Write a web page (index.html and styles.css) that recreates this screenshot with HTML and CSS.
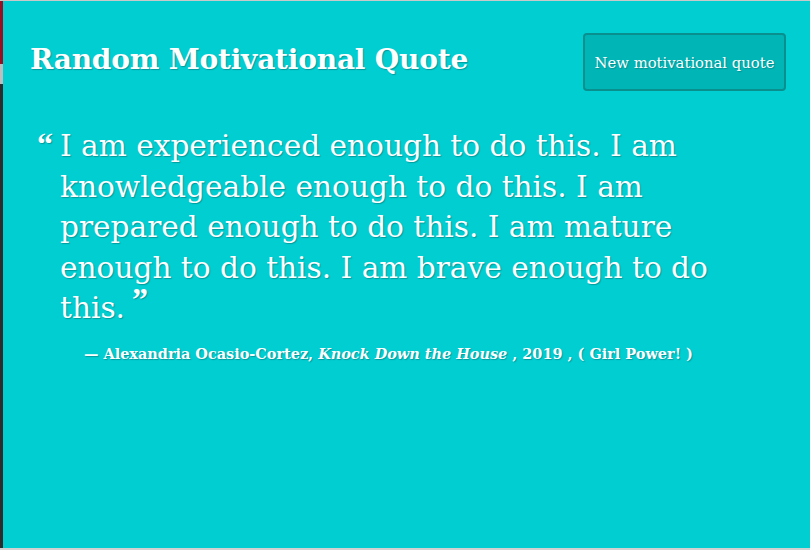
FILE: index.html
```html
<!DOCTYPE html>
<html lang="en">
<head>
<meta charset="utf-8">
<title>Random Motivational Quote</title>
<link rel="stylesheet" href="styles.css">
</head>
<body>
<div class="window">
  <div class="edge"></div>
  <main class="app">
    <header class="header">
      <h1 class="title">Random Motivational Quote</h1>
      <button class="new-btn" type="button">New motivational quote</button>
    </header>
    <section class="quote">
      <div class="quote-body">
        <span class="mark open">&#8220;</span>
        <p class="quote-text">I am experienced enough to do this. I am<br>knowledgeable enough to do this. I am<br>prepared enough to do this. I am mature<br>enough to do this. I am brave enough to do<br>this.<span class="mark close">&#8221;</span></p>
      </div>
      <p class="cite">— Alexandria Ocasio-Cortez, <em>Knock Down the House</em> , 2019 , ( Girl Power! )</p>
    </section>
  </main>
</div>
</body>
</html>
```
FILE: styles.css
```css
html, body {
  margin: 0;
  padding: 0;
  height: 100%;
}
body {
  background: #d6d6d6;
  font-family: "DejaVu Serif", "Liberation Serif", serif;
  color: #ffffff;
}
.window {
  display: flex;
  height: 550px;
  box-sizing: border-box;
  border-top: 1px solid #c9c9c9;
  border-bottom: 2px solid #d2d2d2;
}
.edge {
  width: 3px;
  flex: none;
  background: linear-gradient(#9b1020 0, #9b1020 63px, #bdbdbd 63px, #bdbdbd 83px, #2c2c2c 83px, #2c2c2c 100%);
}
.app {
  flex: 1;
  background: #00ced1;
  padding: 32px 24px 0 27px;
  text-shadow: 1px 1px 1px rgba(0, 60, 60, 0.35);
}
.header {
  display: flex;
  justify-content: space-between;
  align-items: center;
}
.title {
  margin: 0 0 5px;
  font-size: 28px;
  font-weight: bold;
  letter-spacing: -0.2px;
}
.new-btn {
  width: 203px;
  height: 58px;
  background: #00b5b6;
  border: 2px solid #0a8f8f;
  border-radius: 4px;
  color: #ffffff;
  font-family: "DejaVu Serif", "Liberation Serif", serif;
  font-size: 14.8px;
  text-shadow: 1px 1px 1px rgba(0, 60, 60, 0.3);
  padding: 0;
}
.quote {
  padding: 35px 0 0 7px;
}
.quote-body {
  display: flex;
  align-items: flex-start;
}
.mark {
  font-family: "Liberation Serif", serif;
  font-weight: bold;
}
.mark.open {
  font-size: 32px;
  line-height: 1;
  width: 23px;
  flex: none;
  padding-top: 2px;
}
.mark.close {
  font-size: 32px;
  line-height: 0;
  vertical-align: 8px;
  margin-left: 7px;
}
.quote-text {
  margin: 0;
  font-size: 29.6px;
  line-height: 40.5px;
}
.cite {
  margin: 16px 0 0 47px;
  font-size: 14.45px;
  font-weight: bold;
}
.cite em {
  font-weight: bold;
}
```
